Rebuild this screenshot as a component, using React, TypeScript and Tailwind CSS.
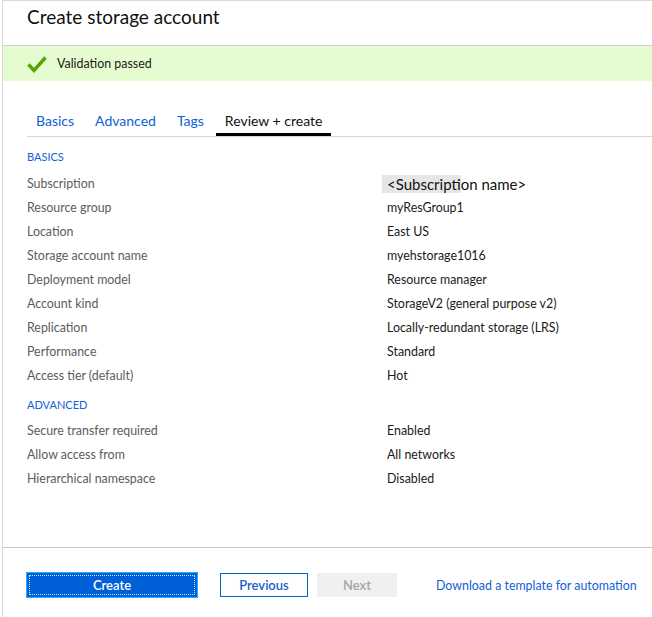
const basics: [string, string][] = [
  ["Resource group", "myResGroup1"],
  ["Location", "East US"],
  ["Storage account name", "myehstorage1016"],
  ["Deployment model", "Resource manager"],
  ["Account kind", "StorageV2 (general purpose v2)"],
  ["Replication", "Locally-redundant storage (LRS)"],
  ["Performance", "Standard"],
  ["Access tier (default)", "Hot"],
];

const advanced: [string, string][] = [
  ["Secure transfer required", "Enabled"],
  ["Allow access from", "All networks"],
  ["Hierarchical namespace", "Disabled"],
];

const tabs = ["Basics", "Advanced", "Tags", "Review + create"];

function Row({ label, value }: { label: string; value: React.ReactNode }) {
  return (
    <div className="grid h-[24px] grid-cols-[360px_1fr] items-center">
      <span className="text-[#5c5c5c]">{label}</span>
      <span className="text-[#1a1a1a]">{value}</span>
    </div>
  );
}

export default function App() {
  return (
    <div
      className="h-[617px] w-[652px] bg-white pl-[2px] text-[12.4px]"
      style={{ fontFamily: '"Segoe UI", Lato, "Open Sans", sans-serif' }}
    >
      <div className="flex h-full flex-col border-l border-t border-[#d9d9d9]">
        <div className="h-[45px] border-b border-[#d0d0d0] pl-[24px] pt-[4px]">
          <h1 className="text-[19px] leading-[24px] text-[#111]">Create storage account</h1>
        </div>

        <div className="flex h-[35px] items-center gap-[10px] bg-[#e5fbd0] pl-[24px] pt-[2px]">
          <svg width="20" height="20" viewBox="0 0 20 20" fill="none">
            <polyline
              points="1.5,9.5 7,15.5 18.5,2.5"
              stroke="#57a300"
              strokeWidth="3.4"
              strokeLinecap="butt"
              strokeLinejoin="miter"
            />
          </svg>
          <span className="text-[#1a1a1a]">Validation passed</span>
        </div>

        <div className="ml-[24px] mt-[30px] flex gap-[3px] border-b border-[#d6d6d6]">
          {tabs.map((t) => {
            const active = t === "Review + create";
            return (
              <div
                key={t}
                className={
                  active
                    ? "border-b-[3px] border-black px-[9px] pb-[2px] text-[14px] leading-[20px] text-[#111]"
                    : "border-b-[3px] border-transparent px-[9px] pb-[2px] text-[14px] leading-[20px] text-[#0b63d6]"
                }
              >
                {t}
              </div>
            );
          })}
        </div>

        <div className="flex-1 pl-[24px]">
          <div className="mt-[12px] h-[16px] text-[11px] leading-[16px] text-[#1761d6]">BASICS</div>
          <div className="mt-[7px]">
            <Row
              label="Subscription"
              value={
                <span className="-ml-[5px] text-[15px] text-[#111]">
                  <span className="bg-[#e6e6e6] pl-[5px]">&lt;Subscripti</span>
                  on name&gt;
                </span>
              }
            />
            {basics.map(([l, v]) => (
              <Row key={l} label={l} value={v} />
            ))}
          </div>
          <div className="mt-[9px] h-[16px] text-[11px] leading-[16px] text-[#1761d6]">ADVANCED</div>
          <div className="mt-[6px]">
            {advanced.map(([l, v]) => (
              <Row key={l} label={l} value={v} />
            ))}
          </div>
        </div>

        <div className="flex h-[70px] items-start border-t border-[#c8c8c8] pl-[24px] pt-[25px]">
          <button className="h-[24px] w-[170px] bg-[#0060d8] pt-[1px] text-[13px] font-semibold text-white outline outline-1 -outline-offset-[3px] outline-dotted outline-[#cfe3ff] ring-1 ring-[#14b4ff]">
            Create
          </button>
          <button className="ml-[23px] h-[24px] w-[88px] border border-[#0063d1] pt-[1px] text-[13px] font-semibold text-[#1a5fd0]">
            Previous
          </button>
          <button className="ml-[9px] h-[24px] w-[80px] bg-[#f0f0f0] pt-[1px] text-[13px] font-semibold text-[#a6a6a6]">
            Next
          </button>
          <span className="ml-[39px] mt-[4px] whitespace-nowrap text-[#1360d6]">
            Download a template for automation
          </span>
        </div>
      </div>
    </div>
  );
}
